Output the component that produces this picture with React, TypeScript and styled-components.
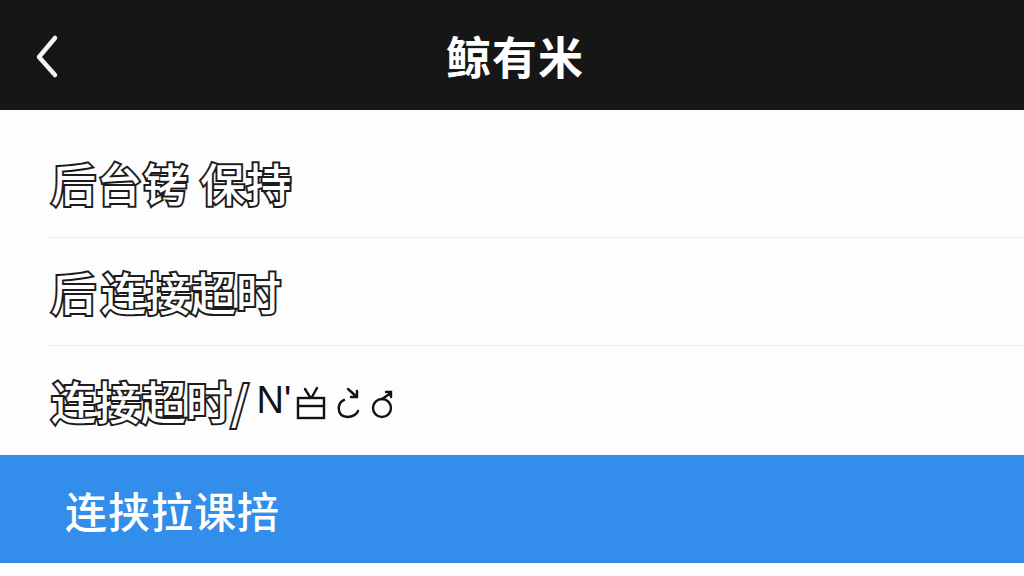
import React from "react";
import styled, { createGlobalStyle } from "styled-components";

const GlobalStyle = createGlobalStyle`
  html, body {
    margin: 0;
    padding: 0;
    background: #fdfdfd;
  }
  body {
    font-family: "Noto Sans CJK SC", "Noto Sans", sans-serif;
    width: 1024px;
    height: 576px;
    overflow: hidden;
  }
`;

const Page = styled.div`
  display: flex;
  flex-direction: column;
  width: 1024px;
  height: 576px;
  background: #fdfdfd;
`;

const Header = styled.header`
  height: 110px;
  background: #161616;
  display: grid;
  grid-template-columns: 120px 1fr 120px;
  align-items: center;
  flex-shrink: 0;
`;

const BackButton = styled.button`
  border: 0;
  background: none;
  padding: 0 0 0 30px;
  display: flex;
  align-items: center;
  height: 100%;
  cursor: pointer;
`;

const Title = styled.h1`
  margin: 0;
  text-align: center;
  color: #fff;
  font-size: 45px;
  font-weight: 700;
  letter-spacing: 1px;
  padding-left: 6px;
`;

const List = styled.ul`
  list-style: none;
  margin: 0;
  padding: 0;
  display: flex;
  flex-direction: column;
`;

const Row = styled.li<{ $height: number; $top?: number; $divider?: boolean }>`
  height: ${(p) => p.$height}px;
  padding-top: ${(p) => p.$top ?? 0}px;
  box-sizing: border-box;
  display: flex;
  align-items: center;
  margin-left: ${(p) => (p.$divider ? 48 : 0)}px;
  padding-left: ${(p) => (p.$divider ? 3 : 51)}px;
  border-bottom: ${(p) => (p.$divider ? "1px solid #ececec" : "none")};
`;

const Outlined = styled.span<{ $gap?: number; $after?: number }>`
  font-size: 45px;
  font-weight: 500;
  color: #fff;
  -webkit-text-stroke: 4px #1c1c1c;
  paint-order: stroke fill;
  letter-spacing: ${(p) => p.$gap ?? 0}px;
  margin-right: ${(p) => p.$after ?? 0}px;
  white-space: pre;
`;

const Plain = styled.span`
  font-family: "Liberation Sans", sans-serif;
  font-size: 38px;
  color: #111;
  margin: 0 4px 0 8px;
`;

const Glyphs = styled.span`
  display: inline-flex;
  align-items: center;
  gap: 6px;
  margin-top: 4px;
`;

const Selected = styled.li`
  height: 108px;
  background: #338dea;
  display: flex;
  align-items: center;
  padding-left: 65px;
  color: #fff;
  font-size: 42px;
  font-weight: 500;
  letter-spacing: 1px;
`;

const Chevron = () => (
  <svg width="34" height="50" viewBox="0 0 34 50">
    <path
      d="M25 8 L9 27 L25 45"
      fill="none"
      stroke="#f4f4f4"
      strokeWidth="4.5"
      strokeLinecap="round"
      strokeLinejoin="round"
    />
  </svg>
);

const TvIcon = () => (
  <svg width="32" height="34" viewBox="0 0 32 34">
    <g fill="none" stroke="#111" strokeWidth="2.4">
      <path d="M10 3 L15 11 M22 2 L17 11" strokeLinecap="round" />
      <rect x="3" y="12" width="26" height="20" />
      <path d="M3 20 H29" />
    </g>
  </svg>
);

const CurlIcon = () => (
  <svg width="30" height="34" viewBox="0 0 30 34">
    <g fill="none" stroke="#111" strokeWidth="2.4" strokeLinecap="round">
      <path d="M11 14 C4 16 3 30 14 31 C20 31 24 28 25 25" />
      <path d="M15 3 L24 11 M24 5 V11 H18" />
    </g>
  </svg>
);

const SpinIcon = () => (
  <svg width="28" height="34" viewBox="0 0 28 34">
    <g fill="none" stroke="#111" strokeWidth="2.4" strokeLinecap="round">
      <circle cx="13" cy="22" r="9" />
      <path d="M13 13 L22 7 M17 6 H22 V11" />
    </g>
  </svg>
);

export default function App() {
  return (
    <>
      <GlobalStyle />
      <Page>
        <Header>
          <BackButton aria-label="返回">
            <Chevron />
          </BackButton>
          <Title>鲸有米</Title>
          <span />
        </Header>
        <List>
          <Row $height={128} $top={18} $divider>
            <Outlined $gap={1}>后台铐 保持</Outlined>
          </Row>
          <Row $height={108} $divider>
            <Outlined $after={5}>后</Outlined>
            <Outlined>连接超时</Outlined>
          </Row>
          <Row $height={109}>
            <Outlined>连接超时/</Outlined>
            <Plain>N'</Plain>
            <Glyphs>
              <TvIcon />
              <CurlIcon />
              <SpinIcon />
            </Glyphs>
          </Row>
          <Selected>连挟拉课掊</Selected>
        </List>
      </Page>
    </>
  );
}
